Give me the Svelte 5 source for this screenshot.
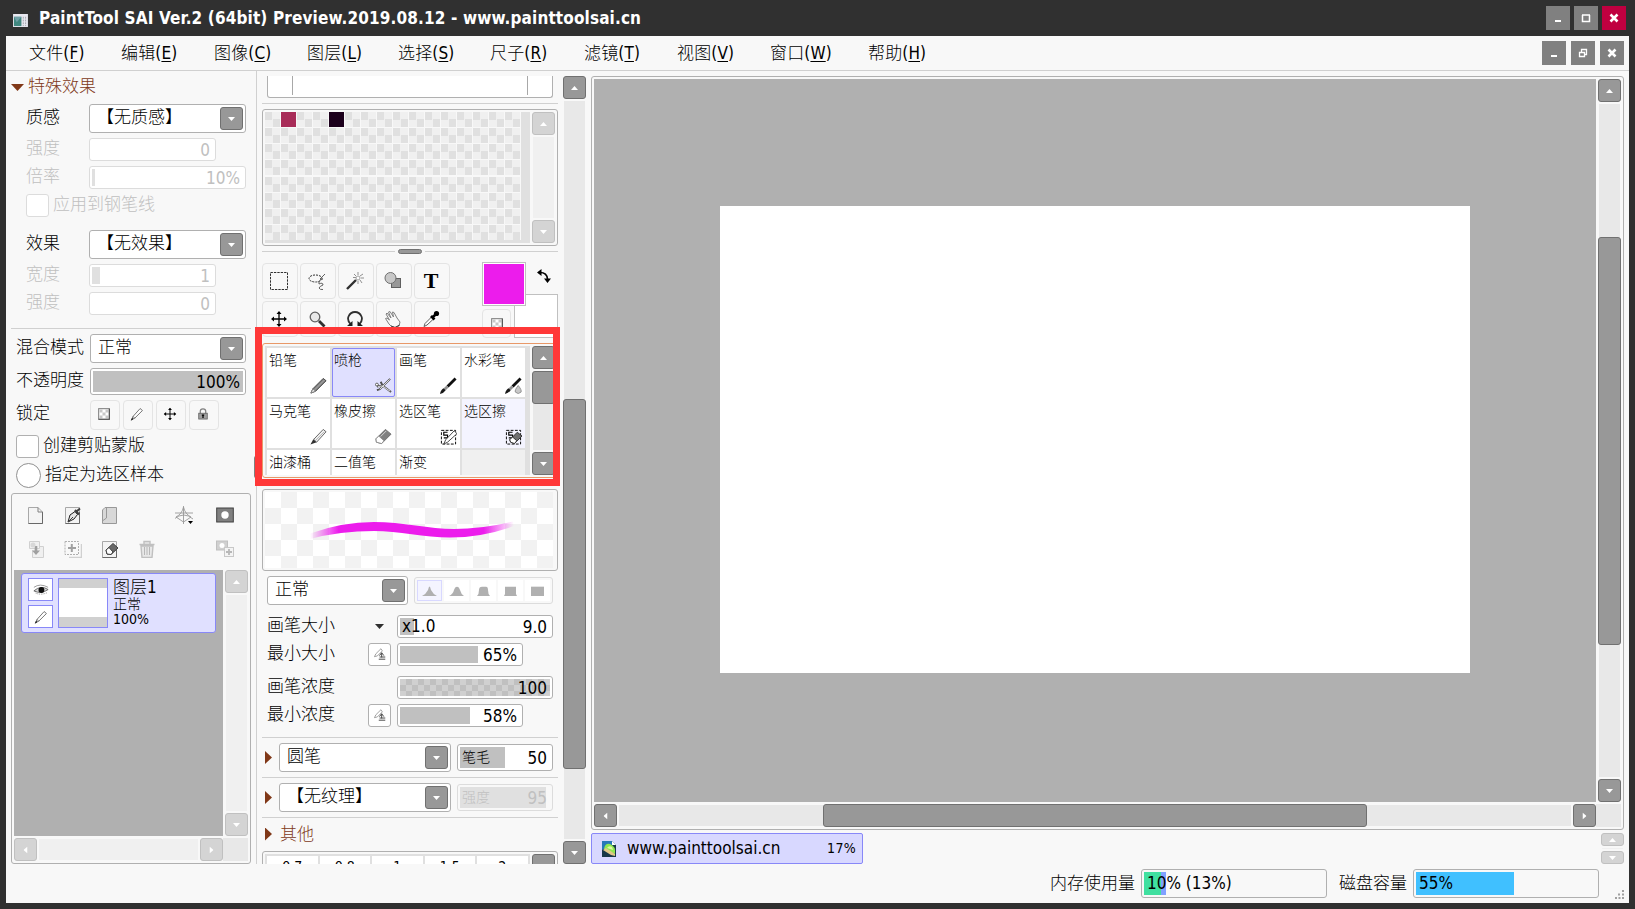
<script>
    const menus = [
        ["文件", "F"], ["编辑", "E"], ["图像", "C"], ["图层", "L"], ["选择", "S"],
        ["尺子", "R"], ["滤镜", "T"], ["视图", "V"], ["窗口", "W"], ["帮助", "H"]
    ];

    const tools = ["select", "lasso", "wand", "shape", "text", "move", "zoom", "rotate", "hand", "picker"];

    const brushes = [
        { name: "铅笔", icon: "pencil" },
        { name: "喷枪", icon: "airbrush" },
        { name: "画笔", icon: "brush" },
        { name: "水彩笔", icon: "water" },
        { name: "马克笔", icon: "marker" },
        { name: "橡皮擦", icon: "eraser" },
        { name: "选区笔", icon: "selpen" },
        { name: "选区擦", icon: "seleraser" },
        { name: "油漆桶" },
        { name: "二值笔" },
        { name: "渐变" },
        { name: "" }
    ];

    const sizes = ["0.7", "0.8", "1", "1.5", "2"];
    const tips = [
        "M0 15Q4 12 6 6L7 1H8L9 6Q11 12 15 15Z",
        "M0 15Q4 12 5 6Q6 1 8 1T11 6Q12 12 15 15Z",
        "M1 15Q3 12 3 6Q3 1 6 1H10Q12 1 12 6Q12 12 14 15Z",
        "M1 15L2 12V1H13V12L14 15Z",
        "M1 1H14V15H1Z"
    ];
    const swatches = Array(128).fill(null);
    swatches[1] = "#a82c58";
    swatches[4] = "#1c001c";

    let brush = $state(1);
    let hover = 7;
    let tip = $state(0);
</script>

{#snippet arrow(dir)}
    <svg class="arrow {dir}" width="7" height="4" viewBox="0 0 7 4"><path d="M0 4L3.5 0L7 4Z" fill="currentColor" /></svg>
{/snippet}

{#snippet scroll(kind, off, start, len)}
    <div class="scroll {kind}" class:off>
        <button class="sbtn">{@render arrow(kind == "h" ? "left" : "up")}</button>
        <div class="track">
            {#if len}
                <div class="thumb" style={kind == "h" ? `margin-left:${start}px;width:${len}px` : `margin-top:${start}px;height:${len}px`}></div>
            {/if}
        </div>
        <button class="sbtn">{@render arrow(kind == "h" ? "right" : "down")}</button>
    </div>
{/snippet}

{#snippet combo(text, width)}
    <div class="combo" style="width:{width}px">
        <span>{text}</span>
        <button class="sbtn">{@render arrow("down")}</button>
    </div>
{/snippet}

{#snippet slider(value, width, fill, cls = "", label = "")}
    <div class="slider {cls}" style="width:{width}px">
        <div class="fill" style="width:{fill}px"></div>
        <em>{label}</em>
        <span>{value}</span>
    </div>
{/snippet}

{#snippet icon(name, size = 18)}
    <svg class="icon" width={size} height={size} viewBox="0 0 18 18" fill="none" stroke="#303030" stroke-width="1">
        {#if name == "select"}
            <path d="M.5 .5H17.5V17.5H.5Z" stroke-dasharray="2.4 1" />
        {:else if name == "lasso"}
            <ellipse cx="7.5" cy="6.5" rx="6.5" ry="3.5" stroke-dasharray="2 1" />
            <path d="M17 2L12 7L15 7M13 7Q10 10 11 12Q15 10 15 13Q12 14 11 16Q12 18 15 17.5" stroke="#606060" />
        {:else if name == "wand"}
            <path d="M1 17L10 8" stroke-width="2.4" />
            <path d="M12 0V3M17 2L14 4M8 2L10 4M18 6H15M7 5.500H10M16 11L14 8M12 12V9" stroke="#909090" />
            <circle cx="12" cy="6" r="2" stroke="#a0a0a0" fill="#fff" />
        {:else if name == "shape"}
            <rect x="7.500" y="6.500" width="9" height="9" fill="#989898" stroke="#606060" />
            <circle cx="6.500" cy="6" r="5.500" fill="#c8c8c8" stroke="#707070" />
        {:else if name == "move"}
            <path d="M9 2V16M2 9H16" stroke="#000" stroke-width="1.300" />
            <path d="M9 1L6.500 4H11.500ZM9 17L6.500 14H11.500ZM1 9L4 6.500V11.500ZM17 9L14 6.500V11.500Z" fill="#000" stroke="none" />
        {:else if name == "zoom"}
            <circle cx="7" cy="7" r="4.800" fill="#e8e8e8" stroke="#606060" stroke-width="1.300" />
            <path d="M11 11L16.500 16.500" stroke-width="2.800" />
        {:else if name == "rotate"}
            <path d="M4.500 14Q1 10 2.500 6.500Q4.500 2 9 2T15.500 6.500Q17 10 13.500 14" stroke-width="1.800" />
            <path d="M1 16H6.500V11ZM17 16H11.500V11Z" fill="#202020" stroke="none" />
        {:else if name == "hand"}
            <path d="M5 14L1.500 8.500L3 8L5.500 10L2 4L3 3L7 8L4.500 2L6 1.500L9.500 7L8.500 2L10 2.500L13 8L16 12L15 16L11 17.500L7 16Z" stroke="#808080" fill="#f8f8f8" />
            <path d="M7 16L11 17.500L15.500 15" stroke="#404040" />
        {:else if name == "picker"}
            <path d="M2 16.500L3 13.500L10 6.500L12 8.500L5 15Z" fill="#fff" stroke="#606060" />
            <path d="M9 6L12.500 9.500M11 7L14 4" stroke="#000" stroke-width="2.600" />
            <circle cx="14.500" cy="3.500" r="2.600" fill="#000" stroke="none" />
        {:else if name == "pencil"}
            <path d="M1 17L3 12.500L14 1.500L17 4L6 15Z" fill="#808080" stroke="#404040" />
            <path d="M5 13.500L15.500 3" stroke="#b0b0b0" />
            <path d="M1 17L3 12.500L6 15Z" fill="#e8e8e8" stroke="#808080" />
        {:else if name == "airbrush"}
            <path d="M16 2L5 13L2 14M2 10L8 9L17 16M8 9L6 5M1 7.500L5 10" stroke="#505050" stroke-width="2" />
            <path d="M15.500 2.500L5 13M3 10L8 9.500L16 15" stroke="#f8f8f8" stroke-width=".9" />
            <circle cx="2" cy="8" r="1.500" stroke="#606060" fill="#fff" />
        {:else if name == "brush" || name == "water"}
            <path d="M8 10L16.500 1.500" stroke="#101010" stroke-width="3" />
            <path d="M5 13L8 10" stroke="#909090" stroke-width="3" />
            <path d="M0 18Q1 13 4 12L6 14Q4 17 0 18Z" fill="#181818" stroke="none" />
            {#if name == "water"}
                <path d="M14 9Q10 14 11 16Q14 19 17 16Q18 14 14 9Z" fill="#c8c8c8" stroke="#909090" />
            {/if}
        {:else if name == "marker"}
            <path d="M4 12L14 1.500L17 4L7 15Z" fill="#f0f0f0" stroke="#606060" />
            <path d="M.5 17.500L3.500 12L7 15Z" fill="#303030" stroke="none" />
            <path d="M6 13L15 4" stroke="#b0b0b0" />
        {:else if name == "eraser"}
            <path d="M1 11.500L11 1.500L17 6.500L7 16.500L1.500 15Z" fill="#808080" stroke="#707070" />
            <path d="M1 11.500L4 8.500L9.500 13.500L7 16.500L1.500 15Z" fill="#fff" stroke="#909090" />
            <path d="M6 9L12 3" stroke="#d8d8d8" />
        {:else if name == "selpen" || name == "seleraser"}
            <path d="M1.500 2.500H16.500V17H1.500Z" stroke="#000" stroke-dasharray="3 1.500" />
            <path d="M8 4.500H4V7.500H8V10.500H4" stroke="#000" stroke-width="1.200" />
            {#if name == "selpen"}
                <path d="M4 17L6 12.500L15 3L18 6L8 15Z" fill="#fff" stroke="#404040" />
            {:else}
                <path d="M5 12.500L13 4.500L18 8.500L10 16.500L6 15Z" fill="#707070" stroke="#303030" />
                <path d="M5 12.500L8 9.500L12.500 13.500L10 16.500L6 15Z" fill="#fff" stroke="#303030" />
            {/if}
        {:else if name == "pen"}
            <path d="M2 16L4 12L13 2L16 4.500L6 14.500ZM4 12L6 14.500" fill="#fff" stroke="#505050" />
            <path d="M1.500 17L3 14.500L4 15.500Z" fill="#202020" />
        {:else if name == "alpha"}
            <rect x="3" y="3" width="12" height="12" fill="#fff" stroke="#808080" stroke-width="1.200" />
            <path d="M4 4h3.300v3.300H4zM10.700 4H14v3.300h-3.300zM7.300 7.300h3.400v3.400H7.300zM4 10.700h3.300V14H4zM10.700 10.700H14V14h-3.300z" fill="#c8c8c8" stroke="none" />
            <path d="M15 3V15H3" stroke="#505050" stroke-width="1.200" />
        {:else if name == "lock"}
            <path d="M5.500 9V5.500Q5.500 2.500 9 2.500T12.500 5.500V9" stroke="#808080" stroke-width="1.600" />
            <rect x="3.500" y="8" width="11" height="7.500" fill="#a0a0a0" stroke="#606060" />
            <path d="M9 9.500V14M7.500 10.500H10.500" stroke="#000" stroke-width="1.600" />
        {:else if name == "new" || name == "newpen" || name == "clear"}
            <path d={name == "new" ? "M1.500 1.500H11L15.500 6V17.500H1.500Z" : "M1.500 1.500H15.500V17.500H1.500Z"} fill="#f4f4f4" stroke="#a8a8a8" />
            <path d="M15.500 6V17.500H1.500" stroke="#686868" />
            {#if name == "new"}
                <path d="M11 1.500V6H15.500" stroke="#808080" />
            {:else if name == "newpen"}
                <path d="M4 16L6 9L11 5.500L13.500 8.500L10 13Z" fill="#e8e8e8" stroke="#202020" />
                <path d="M4 16L9 11" stroke="#404040" />
                <path d="M11 4L15 8.500M12.500 5.500L16 2.500" stroke="#404040" stroke-width="2" />
            {:else}
                <path d="M5 10L12 3.500L17 8L10 14.500L6 14Z" fill="#686868" stroke="#404040" />
                <path d="M5 10L8 7.500L12 12L10 14.500L6 14Z" fill="#fff" stroke="#404040" />
            {/if}
        {:else if name == "folder"}
            <path d="M1.500 4L4 1.500H15.500V17.500H1.500Z" fill="#d8d8d8" stroke="#989898" />
            <path d="M5.500 2V12L2 14.500" stroke="#989898" />
        {:else if name == "ruler"}
            <path d="M8.500 0V18M-1 7H19M8.500 1Q7 8 1 11L8.500 16L16 11Q10 8 8.500 1ZM-1 13Q9 5 18 13" stroke="#989898" stroke-width=".9" />
            <path d="M13 15H18L15.500 18Z" fill="#000" stroke="none" />
        {:else if name == "mask"}
            <rect x=".7" y="2" width="16.600" height="14" fill="#808080" stroke="#404040" />
            <circle cx="9" cy="9" r="3.700" fill="#fff" stroke="none" />
        {:else if name == "merge"}
            <path d="M2.500 1.500H12.500V8.500H2.500ZM5.500 10.500V17.500H16.500V6.500H13" fill="#f0f0f0" stroke="#d0d0d0" />
            <path d="M9 6V12" stroke="#a0a0a0" stroke-width="2.600" />
            <path d="M5 10.500H13L9 15Z" fill="#a0a0a0" stroke="none" />
            <circle cx="6" cy="5" r="2.500" fill="#d8d8d8" stroke="none" />
        {:else if name == "add"}
            <path d="M5 17.500H17.500V4" stroke="#d0d0d0" stroke-width="1.500" />
            <path d="M1 1.500H14.500V14.500H1Z" stroke="#b0b0b0" stroke-dasharray="2 1" />
            <path d="M7.800 4V12M4 8H12" stroke="#a0a0a0" stroke-width="2" />
        {:else if name == "trash"}
            <path d="M3 6L4 17.500H14L15 6ZM1.500 4.500H16.500M6 4V1.500H12V4" fill="#e8e8e8" stroke="#c0c0c0" stroke-width="1.400" />
            <path d="M6.500 7V15M9 7V15M11.500 7V15" stroke="#b8b8b8" />
        {:else if name == "maskadd"}
            <rect x=".5" y="1" width="11" height="9" fill="#d0d0d0" stroke="#c0c0c0" />
            <circle cx="6" cy="5.500" r="2.500" fill="#fff" stroke="none" />
            <rect x="8.500" y="7.500" width="9" height="9" fill="#f4f4f4" stroke="#c8c8c8" />
            <path d="M13 9V15M10 12H16" stroke="#b8b8b8" stroke-width="1.800" />
        {:else if name == "eye"}
            <path d="M1 6Q8 1 17 6" stroke="#909090" />
            <path d="M1 10Q9 3 17 8.500Q9 14 1 10Z" fill="#d8d8d8" stroke="#606060" />
            <circle cx="9.500" cy="9" r="3.300" fill="#101010" stroke="none" />
            <path d="M3 12.500Q9 15 16 12" stroke="#808080" stroke-dasharray="1 1" />
        {:else if name == "pressure"}
            <path d="M2 12L4 8L11 1L13 4L6 11Z" fill="#fff" stroke="#808080" />
            <path d="M12 7V13M9 10.500L12 6.500L15 10.500M9 12.500H17M8 15.500H17" stroke="#404040" stroke-width="1.300" />
        {/if}
    </svg>
{/snippet}

<div class="app">
    <header class="title">
        <svg class="logo" width="15" height="13" viewBox="0 0 16 14">
            <rect width="16" height="14" fill="#e8e8f0" />
            <rect x="1" y="3" width="8" height="10" fill="#408880" />
            <path d="M1 3H9L4 9Z" fill="#70a0a8" />
            <path d="M11 3V13M13.500 3V13" stroke="#a0a0a8" stroke-dasharray="2 1" />
        </svg>
        <h1>PaintTool SAI Ver.2 (64bit) Preview.2019.08.12 - www.painttoolsai.cn</h1>
        <div class="winbtns">
            <button><svg width="24" height="24"><path d="M9 15H15" stroke="#fff" stroke-width="2" /></svg></button>
            <button><svg width="24" height="24"><path d="M8.500 9V15.500H15.500V9M8 9H16" stroke="#fff" stroke-width="1.500" fill="none" /></svg></button>
            <button class="close"><svg width="24" height="24"><path d="M8.500 8.500L15.500 15.500M15.500 8.500L8.500 15.500" stroke="#fff" stroke-width="2.600" /></svg></button>
        </div>
    </header>

    <main>
        <nav>
            <div class="menus">
                {#each menus as [label, key]}
                    <span>{label}(<u>{key}</u>)</span>
                {/each}
            </div>
            <div class="winbtns inner">
                <button><svg width="24" height="24"><path d="M9 15H15" stroke="#fff" stroke-width="2" /></svg></button>
                <button><svg width="24" height="24"><path d="M10.500 11V8.500H15.500V13.500H14M8.500 11.500H13.500V15.500H8.500ZM8 11.500H14" stroke="#fff" stroke-width="1.300" fill="none" /></svg></button>
                <button><svg width="24" height="24"><path d="M8.500 8.500L15.500 15.500M15.500 8.500L8.500 15.500" stroke="#fff" stroke-width="2.600" /></svg></button>
            </div>
        </nav>

        <div class="work">
            <section class="left">
                <div class="head"><i class="tri open"></i>特殊效果</div>
                <div class="row"><label>质感</label>{@render combo("【无质感】", 157)}</div>
                <div class="row dim"><label>强度</label>{@render slider("0", 127, 0)}</div>
                <div class="row dim"><label>倍率</label>{@render slider("10%", 157, 3)}</div>
                <div class="row dim check"><i class="box"></i><label>应用到钢笔线</label></div>
                <div class="row effect"><label>效果</label>{@render combo("【无效果】", 157)}</div>
                <div class="row dim"><label>宽度</label>{@render slider("1", 127, 8)}</div>
                <div class="row dim"><label>强度</label>{@render slider("0", 127, 0)}</div>
                <hr class="wide" />
                <div class="row wider"><label>混合模式</label>{@render combo("正常", 156)}</div>
                <div class="row wider"><label>不透明度</label>{@render slider("100%", 156, 150, "tall")}</div>
                <div class="row wider locks">
                    <label>锁定</label>
                    {#each ["alpha", "pen", "move", "lock"] as name}
                        <button class="flat">{@render icon(name, name == "alpha" ? 16 : 14)}</button>
                    {/each}
                </div>
                <div class="row opt"><i class="box"></i><label>创建剪贴蒙版</label></div>
                <div class="row opt"><i class="radio"></i><label>指定为选区样本</label></div>

                <div class="frame layers">
                    <div class="licons">
                        {#each ["new", "newpen", "folder", "", "ruler", "mask", "merge", "add", "clear", "trash", "", "maskadd"] as name}
                            <span>{@render icon(name, 18)}</span>
                        {/each}
                    </div>
                    <div class="lbody">
                        <div class="llist">
                            <div class="layer">
                                <div class="flags">
                                    <span>{@render icon("eye", 16)}</span>
                                    <span>{@render icon("pen", 14)}</span>
                                </div>
                                <div class="thumbnail"></div>
                                <div class="info">
                                    <b>图层1</b>
                                    <small>正常</small>
                                    <small class="pct">100%</small>
                                </div>
                            </div>
                        </div>
                        {@render scroll("v", true)}
                    </div>
                    <div class="lfoot">{@render scroll("h", true)}<div class="corner"></div></div>
                </div>
            </section>

            <section class="mid">
                <div class="panel">
                    <div class="topbox"></div>
                    <hr />
                    <div class="frame swatches">
                        <div class="well">
                            <div class="grid">
                                {#each swatches as color}
                                    <div class="cell" style:background={color}></div>
                                {/each}
                            </div>
                        </div>
                        {@render scroll("v", true)}
                    </div>
                    <div class="splitter"><i></i></div>

                    <div class="tools">
                        <div class="toolgrid">
                            {#each tools as name}
                                <button class="flat">
                                    {#if name == "text"}<span class="T">T</span>{:else}{@render icon(name)}{/if}
                                </button>
                            {/each}
                        </div>
                        <div class="colors">
                            <div class="bg"></div>
                            <div class="fg"></div>
                            <svg class="swap" width="14" height="14" viewBox="0 0 14 14">
                                <path d="M3 3.500Q10 3.500 10.500 10" stroke="#000" stroke-width="1.600" fill="none" />
                                <path d="M0 3.500L4.500 0V7ZM7 9.500H14L10.500 14Z" />
                            </svg>
                            <button class="flat clear">{@render icon("alpha", 16)}</button>
                        </div>
                    </div>

                    <div class="frame brushes">
                        <div class="well">
                            {#each brushes as b, i}
                                <button class="brush" class:sel={i == brush} class:hover={i == hover} class:none={!b.name} onclick={() => (brush = i)}>
                                    <span>{b.name}</span>
                                    {#if b.icon}{@render icon(b.icon, 17)}{/if}
                                </button>
                            {/each}
                        </div>
                        {@render scroll("v", false, 0, 33)}
                    </div>

                    <div class="frame preview">
                        <div class="checker">
                            <svg width="288" height="76" viewBox="265 492 288 76">
                                <defs>
                                    <linearGradient id="fade">
                                        <stop offset="0" stop-color="#ec1cec" stop-opacity="0" />
                                        <stop offset=".14" stop-color="#ec1cec" />
                                        <stop offset=".85" stop-color="#ec1cec" />
                                        <stop offset="1" stop-color="#ec1cec" stop-opacity="0" />
                                    </linearGradient>
                                </defs>
                                <path d="M310 533.500Q342 522 374 522C402 522 430 529 454 529Q482 529 513 521.500L514 526Q482 537.500 450 537.500C425 537.500 398 531 374 531Q340 531 310 539Z" fill="url(#fade)" />
                            </svg>
                        </div>
                    </div>

                    <div class="row mode">
                        {@render combo("正常", 141)}
                        <div class="tips">
                            {#each tips as d, i}
                                <button class:sel={i == tip} onclick={() => (tip = i)}>
                                    <svg width="15" height="10" viewBox="0 0 15 15" preserveAspectRatio="none"><path {d} fill="#b0b0b0" /></svg>
                                </button>
                            {/each}
                        </div>
                    </div>
                    <div class="row param gap"><label>画笔大小</label><i class="pop"></i>{@render slider("9.0", 156, 14, "", "x1.0")}</div>
                    <div class="row param"><label>最小大小</label><button class="press">{@render icon("pressure", 13)}</button>{@render slider("65%", 126, 78)}</div>
                    <div class="row param gap"><label>画笔浓度</label><i class="blank"></i>{@render slider("100", 156, 150, "density")}</div>
                    <div class="row param"><label>最小浓度</label><button class="press">{@render icon("pressure", 13)}</button>{@render slider("58%", 126, 70)}</div>
                    <hr class="far" />
                    <div class="row tex"><i class="tri"></i>{@render combo("圆笔", 172)}{@render slider("50", 96, 45, "tall cjk", "笔毛")}</div>
                    <hr />
                    <div class="row tex"><i class="tri"></i>{@render combo("【无纹理】", 172)}{@render slider("95", 96, 86, "tall cjk dim", "强度")}</div>
                    <hr />
                    <div class="head other"><i class="tri"></i>其他</div>
                    <div class="frame sizes">
                        <div class="well">
                            {#each sizes as s}<span>{s}</span>{/each}
                        </div>
                        {@render scroll("v", false)}
                    </div>
                </div>
                {@render scroll("v", false, 298, 370)}
                <div class="grab"></div>
                <div class="marker"></div>
            </section>

            <section class="view">
                <div class="frame canvas">
                    <div class="crow">
                        <div class="stage"><div class="paper"></div></div>
                        {@render scroll("v", false, 133, 408)}
                    </div>
                    <div class="cfoot">{@render scroll("h", false, 204, 544)}<div class="corner"></div></div>
                </div>
                <div class="tabs">
                    <div class="tab">
                        <svg width="14" height="16" viewBox="0 0 14 16">
                            <path d="M0 0H10L14 4V16H0Z" fill="#183848" />
                            <path d="M0 0H10V4L0 9Z" fill="#2878b8" />
                            <path d="M2 8Q3 2 8 3Q14 5 13 13Q8 11 2 8Z" fill="#90e850" />
                            <path d="M5 7Q7 4 10 6L11 9Z" fill="#e0f8a0" />
                            <path d="M1 9L4 7L13 13V15L9 14Z" fill="#e0c888" />
                            <path d="M10 0L14 4H10Z" fill="#fff" />
                        </svg>
                        <span>www.painttoolsai.cn</span>
                        <small>17%</small>
                    </div>
                    <div class="spin">
                        <button class="sbtn">{@render arrow("up")}</button>
                        <i></i>
                        <button class="sbtn">{@render arrow("down")}</button>
                    </div>
                </div>
            </section>
        </div>

        <footer>
            <label>内存使用量</label>
            <div class="meter"><i class="green"></i><i class="purple"></i><span>10% (13%)</span></div>
            <label class="disk">磁盘容量</label>
            <div class="meter"><i class="blue"></i><span>55%</span></div>
            <svg class="grip" width="9" height="9" viewBox="0 0 9 9" fill="#a0a0a0">
                <path d="M7 0h2v2H7zM3 3.500h2v2H3zM7 3.500h2v2H7zM0 7h2v2H0zM3.500 7h2v2h-2zM7 7h2v2H7z" />
            </svg>
        </footer>
    </main>
</div>

<style>
    :global(body) {
        margin: 0;
        background: #303030;
    }

    .app, .app * {
        box-sizing: border-box;
    }

    .app {
        width: 1635px;
        height: 909px;
        padding: 0 6px 6px;
        background: #303030;
        color: #000;
        font: 17px/20px "DejaVu Sans Condensed", "Noto Sans CJK SC Light", "Noto Sans CJK SC", sans-serif;
        overflow: hidden;
        white-space: nowrap;
    }

    button {
        display: flex;
        align-items: center;
        justify-content: center;
        margin: 0;
        padding: 0;
        border: 0;
        background: none;
        font: inherit;
        color: inherit;
        flex: none;
    }

    svg, i {
        display: block;
        flex: none;
    }

    em {
        font-style: normal;
    }

    hr {
        height: 1px;
        margin: 5px 0;
        border: 0;
        background: #d0d0d0;
    }

    /* title bar and menu */
    .title {
        display: flex;
        align-items: center;
        height: 36px;
        padding-left: 7px;
    }

    .logo {
        margin-top: 5px;
    }

    h1 {
        flex: 1;
        margin: 0 0 0 11px;
        color: #fff;
        font-size: 17px;
        line-height: 36px;
        letter-spacing: 0.127px;
    }

    .winbtns {
        display: flex;
        gap: 4px;
        padding-right: 3px;
    }

    .winbtns button {
        width: 24px;
        height: 24px;
        background: #808080;
    }

    .winbtns .close {
        background: #c00040;
    }

    .winbtns.inner {
        gap: 5px;
        padding-right: 5px;
    }

    main {
        width: 1623px;
        height: 867px;
        background: #f8f8f8;
    }

    nav {
        display: flex;
        align-items: center;
        justify-content: space-between;
        height: 35px;
        border-bottom: 1px solid #d0d0d0;
    }

    .menus {
        display: grid;
        grid-template-columns: 92px 93px 93px 91px 92px 94px 93px 93px 98px 70px;
        padding-left: 23px;
        letter-spacing: 0.15px;
    }

    u {
        text-underline-offset: 2px;
    }

    .work {
        display: flex;
        height: 793px;
    }

    /* shared controls */
    .frame {
        border: 1px solid #b0b0b0;
        border-radius: 3px;
        padding: 2px;
    }

    .row {
        display: flex;
        align-items: center;
        margin-top: 5px;
    }

    .row label {
        position: relative;
        top: -2px;
        left: -1px;
    }

    .sbtn {
        width: 23px;
        height: 23px;
        background: #989898;
        border: 1px solid #707070;
        border-radius: 3px;
        color: #fff;
    }

    .down {
        transform: rotate(180deg);
    }

    .left.arrow {
        transform: rotate(-90deg);
    }

    .right {
        transform: rotate(90deg);
    }

    .scroll {
        display: flex;
        flex: none;
    }

    .scroll.v {
        flex-direction: column;
        width: 23px;
    }

    .scroll.h {
        height: 23px;
        flex: 1;
    }

    .track {
        flex: 1;
        background: #e8e8e8;
    }

    .v > .track {
        margin: 2px 1px;
        display: flow-root;
    }

    .h > .track {
        margin: 1px 2px;
    }

    .thumb {
        background: #989898;
        border: 1px solid #707070;
        border-radius: 3px;
    }

    .v .thumb {
        width: 23px;
        margin-left: -1px;
    }

    .h .thumb {
        height: 23px;
        margin-top: -1px;
    }

    .off .track {
        background: #f0f0f0;
    }

    .off .sbtn, .spin .sbtn {
        background: #d4d4d4;
        border-color: #c0c0c0;
    }

    .corner {
        width: 25px;
        height: 23px;
        background: #e8e8e8;
    }

    .combo {
        display: flex;
        align-items: center;
        justify-content: space-between;
        height: 29px;
        padding: 0 2px 0 7px;
        border: 1px solid #b0b0b0;
        border-radius: 3px;
        background: #fff;
    }

    .combo span {
        position: relative;
        top: -2px;
    }

    .slider {
        display: flex;
        position: relative;
        align-items: center;
        justify-content: space-between;
        height: 23px;
        padding: 0 5px 0 4px;
        border: 1px solid #b0b0b0;
        border-radius: 3px;
        background: #fff;
    }

    .slider.tall {
        height: 27px;
    }

    .fill {
        position: absolute;
        left: 2px;
        top: 2px;
        bottom: 2px;
        background: #c0c0c0;
    }

    .slider em, .slider span {
        position: relative;
    }

    .slider .fill + em {
        top: -0.5px;
    }

    .cjk em {
        font-size: 14px;
    }

    .dim {
        color: #c0c0c0;
    }

    .dim .slider, .slider.dim, .dim .box {
        border-color: #dcdcdc;
    }

    .dim .fill {
        background: #e0e0e0;
    }

    .slider.dim {
        background: #f8f8f8;
    }

    .density .fill {
        background: conic-gradient(#c0c0c0 25%, #d0d0d0 0 50%, #c0c0c0 0 75%, #d0d0d0 0) 0 0 / 12px 12px;
    }

    .flat {
        border: 1px solid #e4e4e4;
        border-radius: 4px;
    }

    .tri {
        width: 7px;
        height: 13px;
        background: #803818;
        clip-path: polygon(0 0, 100% 50%, 0 100%);
    }

    .tri.open {
        width: 13px;
        height: 7px;
        margin-top: 3px;
        clip-path: polygon(0 0, 100% 0, 50% 100%);
    }

    .box {
        width: 23px;
        height: 23px;
        border: 1px solid #b0b0b0;
        border-radius: 3px;
        background: #fff;
    }

    /* left column */
    .left:not(.arrow) {
        width: 251px;
        padding: 3px 5px 0;
        border-right: 1px solid #d0d0d0;
    }

    .head {
        display: flex;
        align-items: center;
        gap: 4px;
        height: 24px;
        margin-bottom: 6px;
        color: #803818;
    }

    .left .row label {
        width: 62px;
    }

    .left .row {
        padding-left: 16px;
    }

    .head + .row {
        margin-top: 6px;
    }

    .left .check {
        padding-left: 15px;
        gap: 5px;
    }

    .left .row.effect {
        margin-top: 13px;
    }

    .left .row.wider {
        padding-left: 6px;
    }

    .left .row.wider label {
        width: 73px;
    }

    .left .row.opt {
        padding-left: 5px;
        gap: 5px;
    }

    .wide {
        margin-top: 13px;
    }

    .locks .flat {
        width: 30px;
        height: 30px;
        margin-right: 3px;
        padding: 0 2px 2px 0;
    }

    .radio {
        width: 25px;
        height: 25px;
        border: 1px solid #909090;
        border-radius: 50%;
        background: #fff;
    }

    .layers {
        height: 371px;
        margin-top: 5px;
    }

    .licons {
        display: grid;
        grid-template-columns: 37px 37px 37px 37px 41px 20px;
        grid-auto-rows: 34px;
        align-items: center;
        height: 74px;
        padding: 2px 0 0 13px;
    }

    .lbody {
        display: flex;
        gap: 2px;
        height: 266px;
    }

    .llist {
        width: 209px;
        padding: 3px 7px;
        background: #b0b0b0;
    }

    .layer {
        display: flex;
        width: 195px;
        height: 60px;
        padding: 4px 6px;
        border: 1px solid #8888f8;
        border-radius: 3px;
        background: #e0e0ff;
    }

    .flags span {
        display: flex;
        align-items: center;
        justify-content: center;
        width: 25px;
        height: 23px;
        margin-bottom: 4px;
        border: 1px solid #8888f8;
        background: #fff;
    }

    .thumbnail {
        width: 50px;
        height: 50px;
        margin: 0 5px;
        border: 1px solid #8888f8;
        background: linear-gradient(#d0d0d0 9px, #fff 0 38px, #d0d0d0 0);
    }

    .info {
        display: flex;
        flex-direction: column;
    }

    .info b {
        font-weight: normal;
        line-height: 18px;
    }

    .info small {
        font-size: 14px;
        line-height: 16px;
    }

    .info .pct {
        line-height: 14px;
    }

    .lfoot, .cfoot {
        display: flex;
        margin-top: 2px;
    }

    /* middle column */
    .mid {
        position: relative;
        display: flex;
        gap: 5px;
        width: 329px;
        padding: 5px 0 0 5px;
    }

    .panel {
        width: 296px;
        height: 788px;
        overflow: hidden;
    }

    .topbox {
        width: 286px;
        height: 22px;
        margin-left: 5px;
        border: 1px solid #b0b0b0;
        border-top: 0;
        border-radius: 0 0 3px 3px;
        background: linear-gradient(90deg, transparent 24px, #a8a8a8 0 25px, transparent 0 259px, #a8a8a8 0 260px, transparent 0) 0 0 / 100% 19px no-repeat #fff;
    }

    .swatches, .brushes, .sizes {
        display: flex;
        gap: 2px;
    }

    .swatches {
        height: 137px;
    }

    .well {
        width: 265px;
        background: #e0e0e0;
    }

    .grid {
        display: grid;
        grid-template-columns: repeat(16, 15px);
        gap: 1px;
        width: 256px;
        height: 128px;
        background: #f8f8f8;
    }

    .cell {
        height: 15px;
        background: conic-gradient(#f0f0f0 25%, #e0e0e0 0 50%, #f0f0f0 0 75%, #e0e0e0 0);
    }

    .splitter {
        height: 5px;
        margin: 3px 0 8px;
        background: linear-gradient(90deg, #d0d0d0 133px, transparent 0 163px, #d0d0d0 0) 0 2px / 100% 1px no-repeat;
    }

    .splitter i {
        width: 24px;
        height: 5px;
        margin-left: 136px;
        border: 1px solid #707070;
        border-radius: 3px;
        background: #989898;
    }

    .tools {
        display: flex;
        height: 77px;
        margin-bottom: 4px;
    }

    .toolgrid {
        display: grid;
        grid-template-columns: repeat(5, 36px);
        grid-auto-rows: 36px;
        gap: 2px;
        padding-top: 1px;
    }

    .toolgrid .flat {
        padding: 0 2px 1px 0;
    }

    .T {
        font: bold 22px/24px "Liberation Serif", serif;
    }

    .colors {
        position: relative;
        width: 76px;
        margin-left: 32px;
    }

    .fg, .bg {
        position: absolute;
        left: 0;
        top: 0;
        width: 44px;
        height: 44px;
        padding: 1px;
        border: 1px solid #c0c0c0;
        background: #ec1cec content-box;
        box-shadow: inset 0 0 0 1px #fff;
    }

    .bg {
        left: 32px;
        top: 32px;
        background: #fff;
    }

    .swap {
        position: absolute;
        left: 55px;
        top: 7px;
    }

    .clear {
        position: absolute;
        left: 0;
        top: 47px;
        width: 29px;
        height: 29px;
    }

    .brushes {
        height: 135px;
        border-color: #e89868;
    }

    .brushes .well {
        display: grid;
        grid-template-columns: repeat(4, 63px);
        grid-auto-rows: 49px;
        gap: 2px;
        padding: 2px;
        overflow: hidden;
    }

    .brush {
        flex-direction: column;
        align-items: stretch;
        justify-content: space-between;
        padding: 1px 2px 2px 1px;
        border: 1px solid #fff;
        background: #fff;
        font-size: 14px;
        text-align: left;
    }

    .brush .icon {
        align-self: flex-end;
    }

    .brush.sel {
        border-color: #8888f8;
        border-radius: 2px;
        background: #e0e0ff;
    }

    .brush.hover {
        border-color: #f4f4ff;
        background: #f4f4ff;
    }

    .brush.none {
        border-color: #f0f0f0;
        background: #f0f0f0;
    }

    .preview {
        height: 82px;
        margin-top: 11px;
    }

    .checker {
        width: 288px;
        height: 76px;
        background: conic-gradient(#f2f2f2 25%, #fff 0 50%, #f2f2f2 0 75%, #fff 0) 0 0 / 32px 32px;
    }

    .mode {
        padding-left: 5px;
        gap: 6px;
    }

    .tips {
        display: flex;
        gap: 2px;
        width: 139px;
        height: 27px;
        padding: 2px;
        border: 1px solid #dcdcdc;
        border-radius: 3px;
    }

    .tips button {
        width: 25px;
        height: 21px;
        background: #fff;
    }

    .tips .sel {
        border: 1px solid #d8d8ff;
        background: #f4f4ff;
    }

    .param {
        padding-left: 5px;
    }

    .param.gap {
        margin-top: 10px;
    }

    .param label {
        left: 0;
        width: 101px;
    }

    .press, .blank {
        width: 23px;
        height: 23px;
        margin-right: 6px;
    }

    .press {
        border: 1px solid #b0b0b0;
        border-radius: 3px;
        background: #fff;
    }

    .pop {
        width: 9px;
        height: 5px;
        margin: 0 13px 0 7px;
        background: #303030;
        clip-path: polygon(0 0, 100% 0, 50% 100%);
    }

    .far {
        margin-top: 10px;
    }

    .tex {
        padding-left: 3px;
    }

    .tex .combo {
        margin: 0 6px 0 7px;
    }

    .other {
        height: 22px;
        margin: 0 0 6px;
        padding-left: 3px;
        gap: 8px;
    }

    .sizes {
        height: 60px;
    }

    .sizes .well {
        display: grid;
        grid-template-columns: repeat(5, 50.5px);
        gap: 2px;
        padding: 2px;
    }

    .sizes span {
        background: #fff;
        font-size: 14px;
        line-height: 20px;
        text-align: center;
    }

    .grab {
        position: absolute;
        left: -3px;
        top: 385px;
        width: 3px;
        height: 22px;
        background: #808080;
        border-radius: 2px 0 0 2px;
    }

    /* highlighted brush area */
    .marker {
        position: absolute;
        left: -2px;
        top: 256px;
        width: 305px;
        height: 159px;
        border: 7px solid #ff3838;
    }

    /* canvas */
    .view {
        padding: 5px 0 0 5px;
    }

    .canvas {
        width: 1033px;
        height: 754px;
    }

    .crow {
        display: flex;
        gap: 2px;
        height: 723px;
    }

    .stage {
        width: 1002px;
        padding: 127px 126px;
        background: #b0b0b0;
    }

    .paper {
        width: 750px;
        height: 467px;
        background: #fff;
    }

    .tabs {
        display: flex;
        justify-content: space-between;
        margin-top: 3px;
    }

    .tab {
        display: flex;
        align-items: center;
        width: 272px;
        height: 31px;
        padding: 0 6px 0 10px;
        border: 1px solid #8888f8;
        border-radius: 2px;
        background: #d8d8ff;
    }

    .tab span {
        flex: 1;
        margin: 0 0 1px 11px;
    }

    .tab small {
        margin-bottom: 1px;
        font-size: 14px;
        letter-spacing: 0.3px;
    }

    .spin .sbtn {
        height: 13px;
    }

    .spin i {
        height: 1px;
        margin: 2px 1px;
        background: #f0f0f0;
    }

    /* status bar */
    footer {
        display: flex;
        align-items: center;
        justify-content: flex-end;
        height: 39px;
        padding-right: 5px;
    }

    footer label {
        width: 91px;
        padding-bottom: 2px;
    }

    footer .disk {
        width: 74px;
        margin-left: 12px;
    }

    .meter {
        position: relative;
        display: flex;
        width: 186px;
        height: 29px;
        padding: 2px;
        border: 1px solid #b0b0b0;
        border-radius: 3px;
    }

    .meter i {
        width: 17px;
        background: #40e0a0;
    }

    .meter .purple {
        width: 5px;
        background: #80a0ff;
    }

    .meter .blue {
        width: 98px;
        background: #40c0ff;
    }

    .meter span {
        position: absolute;
        left: 5px;
        top: 3px;
    }

    .grip {
        align-self: flex-end;
        margin: 0 0 4px 16px;
    }
</style>
